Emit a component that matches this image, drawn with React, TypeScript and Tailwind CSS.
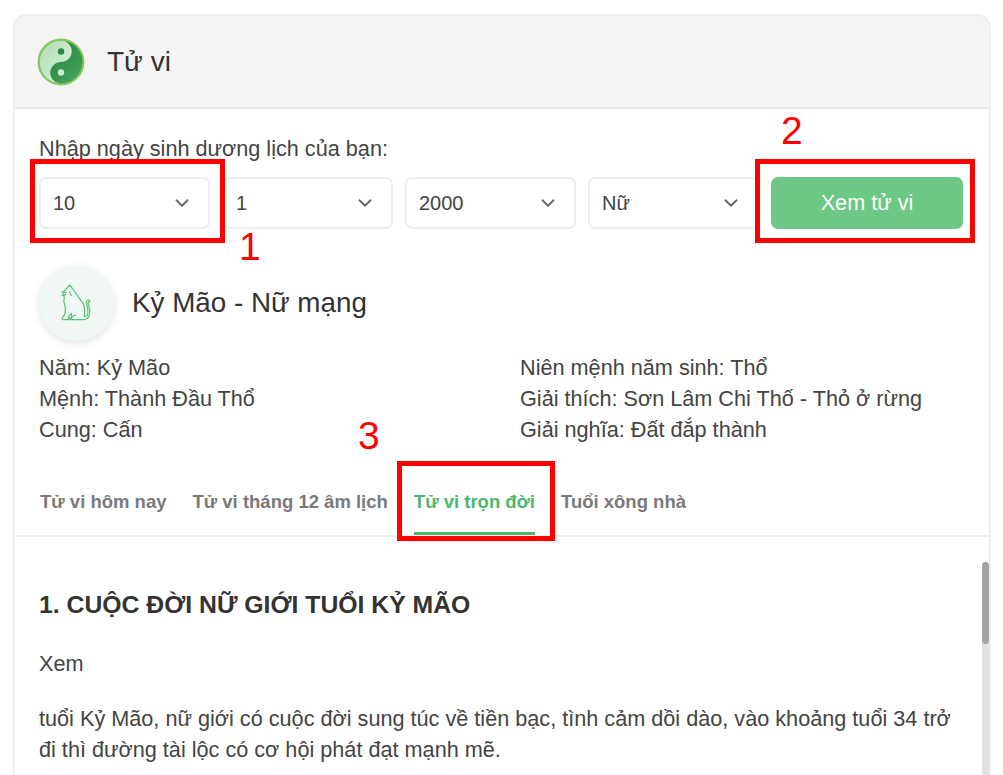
import { ChevronDown } from "lucide-react";

const selects = ["10", "1", "2000", "Nữ"];
const tabs = ["Tử vi hôm nay", "Tử vi tháng 12 âm lịch", "Tử vi trọn đời", "Tuổi xông nhà"];

function YinYang() {
  return (
    <svg width="48" height="48" viewBox="0 0 48 48">
      <defs>
        <linearGradient id="light" x1="0" y1="0" x2="1" y2="1">
          <stop offset="0" stopColor="#a8dcae" />
          <stop offset="1" stopColor="#e4f4e4" />
        </linearGradient>
        <linearGradient id="dark" x1="0" y1="0" x2="1" y2="1">
          <stop offset="0" stopColor="#1f7a3c" />
          <stop offset="1" stopColor="#4aa860" />
        </linearGradient>
      </defs>
      <circle cx="24" cy="24" r="23.5" fill="#86c95c" />
      <circle cx="24" cy="24" r="21.5" fill="url(#dark)" />
      <path d="M24 2.5a21.5 21.5 0 0 0 0 43a10.75 10.75 0 0 1 0-21.5a10.75 10.75 0 0 0 0-21.5z" fill="url(#light)" />
      <circle cx="24" cy="13.5" r="3.2" fill="#2b8a47" />
      <circle cx="24" cy="34.5" r="3.2" fill="#cdeccf" />
    </svg>
  );
}

function Cat() {
  return (
    <svg className="ml-[2px]" width="34" height="40" viewBox="0 0 36 42" fill="none" stroke="#5cc27a" strokeWidth="1.3" strokeLinejoin="round" strokeLinecap="round">
      <path d="M7 3.5 L9 1 C11 3 13 5 14.5 8 C17 12 21 16 23.5 21 C25.5 25 25.5 30 24.5 34.5 C26.5 34.5 28 33.5 28.5 31 C29 27 28 24 27 20.5 C26.5 18.5 27.5 16.5 29 16.5 C30.5 16.5 30.8 18 30 19 C29.4 18.4 28.6 18.6 28.8 20 C30 24 31 28 30.2 32 C29.4 35.5 27.5 37.5 24 37.5 L9.5 37.5 C8.7 37.5 8.5 36 9.5 35.5 L11.5 35 L11 31 L8 34.5 L7.5 37.5 L2 37.5 C1 37 1 36 1.8 35 C4.5 32 5 29 4.5 25 C4 21 2 18 3.5 15 C4 13 2.5 11 1.8 10 C3 7 5 5.5 7 3.5 Z" />
      <path d="M10.5 37 C11 34 14 33 15.5 33 M5 9 L1 8 M5 11 L1 12 M9 8 L11 12" />
    </svg>
  );
}

function RedBox({ className }: { className: string }) {
  return <div className={`absolute border-[5px] border-[#ff0000] ${className}`} />;
}

function RedNumber({ className, children }: { className: string; children: string }) {
  return <div className={`absolute text-[39px] leading-none text-[#ff0000] ${className}`}>{children}</div>;
}

export default function App() {
  return (
    <div className="relative h-[775px] overflow-hidden bg-white font-['Liberation_Sans',Arial,sans-serif] text-[21.67px] text-[#444]">
      <div className="pl-[13px] pr-[12px] pt-[14px]">
        <div className="rounded-t-[14px] border-2 border-b-0 border-[#eeeeee]">
          <header className="flex h-[93px] items-center gap-[22px] rounded-t-[12px] border-b-2 border-[#e8e8e8] bg-[#f4f4f4] pl-[22px]">
            <YinYang />
            <h1 className="text-[28px] text-[#333]">Tử vi</h1>
          </header>

          <div className="px-[24px] pt-[28px]">
            <p className="leading-[24px]">Nhập ngày sinh dương lịch của bạn:</p>
            <div className="mt-[16px] flex gap-[12px]">
              {selects.map((value) => (
                <div key={value} className="flex h-[52px] w-[171px] items-center justify-between rounded-[7px] border-2 border-[#eeeeee] pl-[12px] pr-[15px] text-[20px]">
                  <span>{value}</span>
                  <ChevronDown className="h-[22px] w-[22px] text-[#666]" strokeWidth={2} />
                </div>
              ))}
              <button className="h-[52px] w-[192px] rounded-[7px] bg-[#6cc884] text-[21.67px] text-white">Xem tử vi</button>
            </div>

            <div className="mt-[37px] flex items-center gap-[18px]">
              <div className="flex h-[75px] w-[75px] items-center justify-center rounded-full bg-[#f1f8f4] shadow-[0_2px_8px_rgba(0,0,0,0.12)]">
                <Cat />
              </div>
              <h2 className="pb-[2px] text-[27.8px] text-[#333]">Kỷ Mão - Nữ mạng</h2>
            </div>

            <div className="mt-[11px] grid grid-cols-[481px_1fr] leading-[31px]">
              <span>Năm: Kỷ Mão</span>
              <span>Niên mệnh năm sinh: Thổ</span>
              <span>Mệnh: Thành Đầu Thổ</span>
              <span>Giải thích: Sơn Lâm Chi Thố - Thỏ ở rừng</span>
              <span>Cung: Cấn</span>
              <span>Giải nghĩa: Đất đắp thành</span>
            </div>
          </div>

          <nav className="mt-[41px] flex h-[51px] gap-[26px] border-b-2 border-[#eeeeee] pl-[25px]">
            {tabs.map((tab, i) => (
              <div key={tab} className={`h-[49px] text-[18.5px] font-bold leading-[32px] ${i === 2 ? "border-b-[3px] border-[#4cb86a] text-[#4cb86a]" : "text-[#7a7a7a]"}`}>
                {tab}
              </div>
            ))}
          </nav>

          <div className="flex">
            <div className="flex-1 pl-[24px] pr-[30px] pt-[52px]">
              <h3 className="text-[24.75px] font-bold leading-[32px] text-[#333]">1. CUỘC ĐỜI NỮ GIỚI TUỔI KỶ MÃO</h3>
              <p className="mt-[27px] leading-[31px]">Xem</p>
              <p className="mt-[24px] leading-[31px]">
                tuổi Kỷ Mão, nữ giới có cuộc đời sung túc về tiền bạc, tình cảm dồi dào, vào khoảng tuổi 34 trở đi thì đường tài lộc có cơ hội phát đạt mạnh mẽ.
              </p>
            </div>
            <div className="mt-[25px] h-[300px] w-[7px] rounded-full bg-[#e2e2e2]">
              <div className="h-[82px] rounded-full bg-[#a3a3a3]" />
            </div>
          </div>
        </div>
      </div>

      <RedBox className="left-[30px] top-[159px] h-[84px] w-[195px]" />
      <RedBox className="left-[755px] top-[159px] h-[84px] w-[220px]" />
      <RedBox className="left-[397px] top-[461px] h-[80px] w-[158px]" />
      <RedNumber className="left-[239px] top-[227px]">1</RedNumber>
      <RedNumber className="left-[781px] top-[111px]">2</RedNumber>
      <RedNumber className="left-[358px] top-[416px]">3</RedNumber>
    </div>
  );
}
